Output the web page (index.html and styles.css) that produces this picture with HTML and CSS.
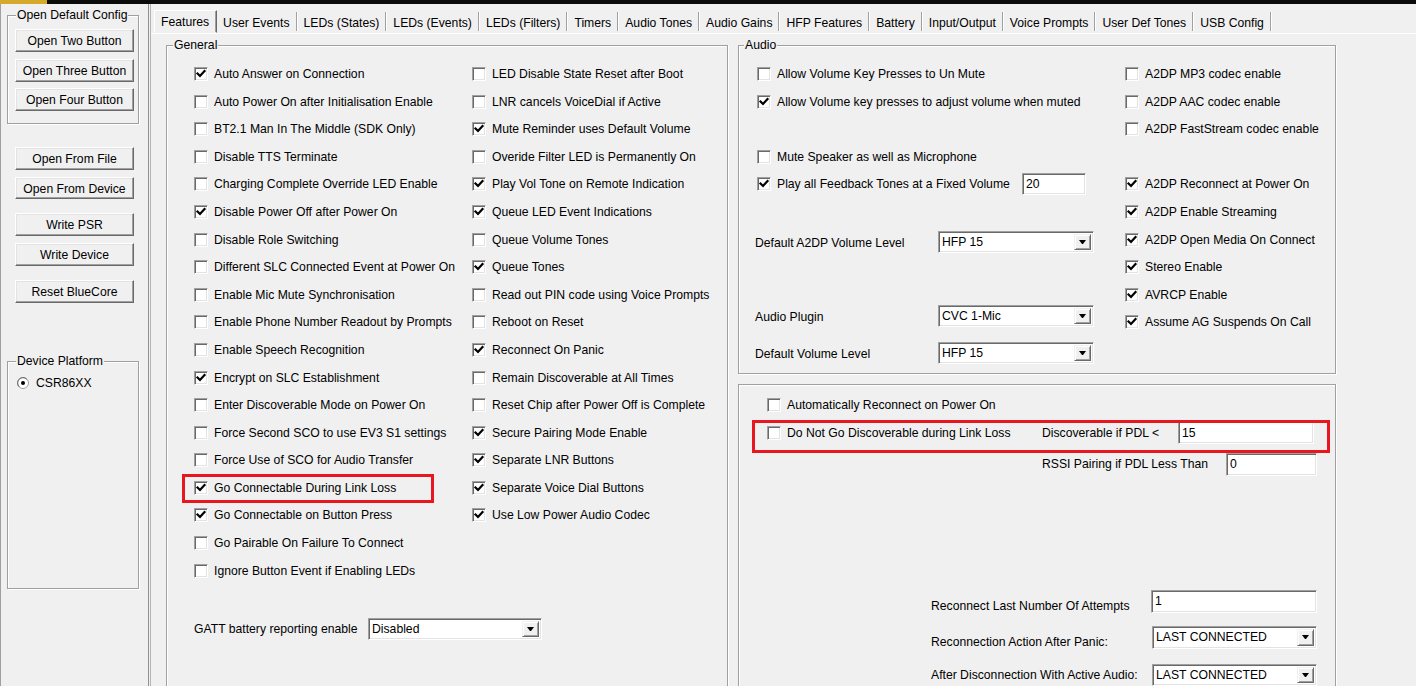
FILE: index.html
```html
<!DOCTYPE html>
<html>
<head>
<meta charset="utf-8">
<title>Config</title>
<link rel="stylesheet" href="styles.css">
</head>
<body>
<div class="topbar"><span class="accent"></span></div>
<div class="app">
  <aside class="side">
    <fieldset class="grp fs-open">
      <legend>Open Default Config</legend>
      <div class="fs-open-body">
        <div class="btn">Open Two Button</div>
        <div class="btn">Open Three Button</div>
        <div class="btn">Open Four Button</div>
      </div>
    </fieldset>
    <div class="side-btns">
      <div class="btn b-file">Open From File</div>
      <div class="btn b-dev">Open From Device</div>
      <div class="btn b-psr">Write PSR</div>
      <div class="btn b-wdev">Write Device</div>
      <div class="btn b-reset">Reset BlueCore</div>
    </div>
    <fieldset class="grp fs-plat">
      <legend>Device Platform</legend>
      <div class="radio-row">
        <svg class="radio" width="12" height="12" viewBox="0 0 12 12"><circle cx="6" cy="6" r="5.5" fill="#fff" stroke="#a0a0a0"/><path d="M2.2 9.8A5 5 0 0 1 9.8 2.2" fill="none" stroke="#696969"/><circle cx="6" cy="6" r="2" fill="#000"/></svg>
        <span>CSR86XX</span>
      </div>
    </fieldset>
  </aside>

  <div class="tabctl">
    <div class="tabstrip">
      <div class="tab sel">Features</div>
      <div class="tab">User Events</div>
      <div class="tab">LEDs (States)</div>
      <div class="tab">LEDs (Events)</div>
      <div class="tab">LEDs (Filters)</div>
      <div class="tab">Timers</div>
      <div class="tab">Audio Tones</div>
      <div class="tab">Audio Gains</div>
      <div class="tab">HFP Features</div>
      <div class="tab">Battery</div>
      <div class="tab">Input/Output</div>
      <div class="tab">Voice Prompts</div>
      <div class="tab">User Def Tones</div>
      <div class="tab">USB Config</div>
    </div>
    <div class="page">
      <fieldset class="grp general">
        <legend>General</legend>
        <div class="gbody">
          <div class="cols">
            <div class="col c1">
              <div class="row"><span class="box"><svg viewBox="0 0 12 12"><polyline points="2.5,5.5 5,8 9.5,3"/></svg></span><span>Auto Answer on Connection</span></div>
              <div class="row"><span class="box"></span><span>Auto Power On after Initialisation Enable</span></div>
              <div class="row"><span class="box"></span><span>BT2.1 Man In The Middle (SDK Only)</span></div>
              <div class="row"><span class="box"></span><span>Disable TTS Terminate</span></div>
              <div class="row"><span class="box"></span><span>Charging Complete Override LED Enable</span></div>
              <div class="row"><span class="box"><svg viewBox="0 0 12 12"><polyline points="2.5,5.5 5,8 9.5,3"/></svg></span><span>Disable Power Off after Power On</span></div>
              <div class="row"><span class="box"></span><span>Disable Role Switching</span></div>
              <div class="row"><span class="box"></span><span>Different SLC Connected Event at Power On</span></div>
              <div class="row"><span class="box"></span><span>Enable Mic Mute Synchronisation</span></div>
              <div class="row"><span class="box"></span><span>Enable Phone Number Readout by Prompts</span></div>
              <div class="row"><span class="box"></span><span>Enable Speech Recognition</span></div>
              <div class="row"><span class="box"><svg viewBox="0 0 12 12"><polyline points="2.5,5.5 5,8 9.5,3"/></svg></span><span>Encrypt on SLC Establishment</span></div>
              <div class="row"><span class="box"></span><span>Enter Discoverable Mode on Power On</span></div>
              <div class="row"><span class="box"></span><span>Force Second SCO to use EV3 S1 settings</span></div>
              <div class="row"><span class="box"></span><span>Force Use of SCO for Audio Transfer</span></div>
              <div class="row hl hl-a"><span class="box"><svg viewBox="0 0 12 12"><polyline points="2.5,5.5 5,8 9.5,3"/></svg></span><span>Go Connectable During Link Loss</span></div>
              <div class="row"><span class="box"><svg viewBox="0 0 12 12"><polyline points="2.5,5.5 5,8 9.5,3"/></svg></span><span>Go Connectable on Button Press</span></div>
              <div class="row"><span class="box"></span><span>Go Pairable On Failure To Connect</span></div>
              <div class="row"><span class="box"></span><span>Ignore Button Event if Enabling LEDs</span></div>
            </div>
            <div class="col c2">
              <div class="row"><span class="box"></span><span>LED Disable State Reset after Boot</span></div>
              <div class="row"><span class="box"></span><span>LNR cancels VoiceDial if Active</span></div>
              <div class="row"><span class="box"><svg viewBox="0 0 12 12"><polyline points="2.5,5.5 5,8 9.5,3"/></svg></span><span>Mute Reminder uses Default Volume</span></div>
              <div class="row"><span class="box"></span><span>Overide Filter LED is Permanently On</span></div>
              <div class="row"><span class="box"><svg viewBox="0 0 12 12"><polyline points="2.5,5.5 5,8 9.5,3"/></svg></span><span>Play Vol Tone on Remote Indication</span></div>
              <div class="row"><span class="box"><svg viewBox="0 0 12 12"><polyline points="2.5,5.5 5,8 9.5,3"/></svg></span><span>Queue LED Event Indications</span></div>
              <div class="row"><span class="box"></span><span>Queue Volume Tones</span></div>
              <div class="row"><span class="box"><svg viewBox="0 0 12 12"><polyline points="2.5,5.5 5,8 9.5,3"/></svg></span><span>Queue Tones</span></div>
              <div class="row"><span class="box"></span><span>Read out PIN code using Voice Prompts</span></div>
              <div class="row"><span class="box"></span><span>Reboot on Reset</span></div>
              <div class="row"><span class="box"><svg viewBox="0 0 12 12"><polyline points="2.5,5.5 5,8 9.5,3"/></svg></span><span>Reconnect On Panic</span></div>
              <div class="row"><span class="box"></span><span>Remain Discoverable at All Times</span></div>
              <div class="row"><span class="box"></span><span>Reset Chip after Power Off is Complete</span></div>
              <div class="row"><span class="box"><svg viewBox="0 0 12 12"><polyline points="2.5,5.5 5,8 9.5,3"/></svg></span><span>Secure Pairing Mode Enable</span></div>
              <div class="row"><span class="box"><svg viewBox="0 0 12 12"><polyline points="2.5,5.5 5,8 9.5,3"/></svg></span><span>Separate LNR Buttons</span></div>
              <div class="row"><span class="box"><svg viewBox="0 0 12 12"><polyline points="2.5,5.5 5,8 9.5,3"/></svg></span><span>Separate Voice Dial Buttons</span></div>
              <div class="row"><span class="box"><svg viewBox="0 0 12 12"><polyline points="2.5,5.5 5,8 9.5,3"/></svg></span><span>Use Low Power Audio Codec</span></div>
            </div>
          </div>
          <div class="frow gatt">
            <span class="lbl w174">GATT battery reporting enable</span>
            <div class="combo w174"><span class="val">Disabled</span><span class="drop"></span></div>
          </div>
        </div>
      </fieldset>

      <div class="rightcol">
        <fieldset class="grp audio">
          <legend>Audio</legend>
          <div class="abody">
            <div class="acol aleft">
              <div class="row"><span class="box"></span><span>Allow Volume Key Presses to Un Mute</span></div>
              <div class="row"><span class="box"><svg viewBox="0 0 12 12"><polyline points="2.5,5.5 5,8 9.5,3"/></svg></span><span>Allow Volume key presses to adjust volume when muted</span></div>
              <div class="row"></div>
              <div class="row"><span class="box"></span><span>Mute Speaker as well as Microphone</span></div>
              <div class="row">
                <div class="cbw w265"><span class="box"><svg viewBox="0 0 12 12"><polyline points="2.5,5.5 5,8 9.5,3"/></svg></span><span>Play all Feedback Tones at a Fixed Volume</span></div>
                <div class="tb w64 h22">20</div>
              </div>
              <div class="frow lbl-row m-a2dp">
                <span class="lbl w183">Default A2DP Volume Level</span>
                <div class="combo w156"><span class="val">HFP 15</span><span class="drop"></span></div>
              </div>
              <div class="frow lbl-row m-plug">
                <span class="lbl w183">Audio Plugin</span>
                <div class="combo w156"><span class="val">CVC 1-Mic</span><span class="drop"></span></div>
              </div>
              <div class="frow lbl-row m-dvol">
                <span class="lbl w183">Default Volume Level</span>
                <div class="combo w156"><span class="val">HFP 15</span><span class="drop"></span></div>
              </div>
            </div>
            <div class="acol aright">
              <div class="row"><span class="box"></span><span>A2DP MP3 codec enable</span></div>
              <div class="row"><span class="box"></span><span>A2DP AAC codec enable</span></div>
              <div class="row"><span class="box"></span><span>A2DP FastStream codec enable</span></div>
              <div class="row"></div>
              <div class="row"><span class="box"><svg viewBox="0 0 12 12"><polyline points="2.5,5.5 5,8 9.5,3"/></svg></span><span>A2DP Reconnect at Power On</span></div>
              <div class="row"><span class="box"><svg viewBox="0 0 12 12"><polyline points="2.5,5.5 5,8 9.5,3"/></svg></span><span>A2DP Enable Streaming</span></div>
              <div class="row"><span class="box"><svg viewBox="0 0 12 12"><polyline points="2.5,5.5 5,8 9.5,3"/></svg></span><span>A2DP Open Media On Connect</span></div>
              <div class="row"><span class="box"><svg viewBox="0 0 12 12"><polyline points="2.5,5.5 5,8 9.5,3"/></svg></span><span>Stereo Enable</span></div>
              <div class="row"><span class="box"><svg viewBox="0 0 12 12"><polyline points="2.5,5.5 5,8 9.5,3"/></svg></span><span>AVRCP Enable</span></div>
              <div class="row"><span class="box"><svg viewBox="0 0 12 12"><polyline points="2.5,5.5 5,8 9.5,3"/></svg></span><span>Assume AG Suspends On Call</span></div>
            </div>
          </div>
        </fieldset>

        <fieldset class="grp conn">
          <div class="cbody">
            <div class="row"><span class="box"></span><span>Automatically Reconnect on Power On</span></div>
            <div class="row hl hl-b">
              <div class="cbw w275"><span class="box"></span><span>Do Not Go Discoverable during Link Loss</span></div>
              <span class="lbl w136">Discoverable if PDL &lt;</span>
              <div class="tb w136 h23">15</div>
            </div>
            <div class="frow m-rssi">
              <span class="lbl w184">RSSI Pairing if PDL Less Than</span>
              <div class="tb w91 h23">0</div>
            </div>
            <div class="frow m-att">
              <span class="lbl w220 low">Reconnect Last Number Of Attempts</span>
              <div class="tb w166 h23">1</div>
            </div>
            <div class="frow m-panic">
              <span class="lbl w221 low">Reconnection Action After Panic:</span>
              <div class="combo w165 h23"><span class="val">LAST CONNECTED</span><span class="drop"></span></div>
            </div>
            <div class="frow m-after">
              <span class="lbl w221">After Disconnection With Active Audio:</span>
              <div class="combo w165"><span class="val">LAST CONNECTED</span><span class="drop"></span></div>
            </div>
          </div>
        </fieldset>
      </div>
    </div>
  </div>
</div>
</body>
</html>
```

FILE: styles.css
```css
*, *::before, *::after { box-sizing: border-box; }
html, body { margin: 0; padding: 0; }
body {
  width: 1416px;
  height: 686px;
  overflow: hidden;
  background: #f0f0f0;
  font-family: "Liberation Sans", Arial, sans-serif;
  font-size: 12.2px;
  color: #000;
  line-height: 14px;
}

.topbar { height: 4px; background: #0b0b0b; display: flex; }
.topbar .accent { width: 47px; background: #d5a92a; }

.app { display: flex; height: 682px; overflow: hidden; }

/* ---------- side panel ---------- */
.side {
  width: 149px;
  flex: none;
  border-left: 1px solid #a0a0a0;
  border-right: 1px solid #8f8f8f;
  padding-left: 6px;
}

fieldset.grp {
  margin: 0;
  padding: 0;
  min-width: 0;
  border: 1px solid #a0a0a0;
  box-shadow: inset 1px 1px 0 #fff, 1px 1px 0 #fff;
}
fieldset.grp > legend {
  padding: 0 1px;
  line-height: 14px;
  background: #f0f0f0;
}

.fs-open { width: 132px; margin-top: 4px !important; }
.fs-open > legend, .fs-plat > legend { margin-left: 8px; }
.fs-open-body {
  padding: 7px 0 12px 7px;
  display: flex;
  flex-direction: column;
  gap: 6.5px;
}

.btn {
  width: 119px;
  height: 23px;
  display: flex;
  align-items: center;
  justify-content: center;
  padding-top: 1px;
  background: #f0f0f0;
  border: 1px solid;
  border-color: #fff #696969 #696969 #fff;
  box-shadow: inset -1px -1px 0 #a0a0a0, inset 1px 1px 0 #e3e3e3;
}

.side-btns { padding-left: 8px; display: flex; flex-direction: column; }
.b-file { margin-top: 23px; }
.b-dev { margin-top: 7px; height: 22px; }
.b-psr { margin-top: 14px; }
.b-wdev { margin-top: 7px; }
.b-reset { margin-top: 14px; }

.fs-plat { width: 132px; height: 235px; margin-top: 51px !important; }
.radio-row { display: flex; align-items: center; padding-left: 9px; margin-top: 8px; height: 14px; }
.radio { flex: none; margin-right: 7px; display: block; }

/* ---------- tab control ---------- */
.tabctl {
  flex: 1;
  min-width: 0;
  margin-left: 1px;
  border-left: 1px solid #b4b4b4;
  display: flex;
  flex-direction: column;
}
.tabstrip {
  flex: none;
  height: 29px;
  display: flex;
  align-items: flex-end;
  padding-left: 3px;
}
.tab {
  height: 19px;
  margin-bottom: 2px;
  padding: 2px 6px 0 6px;
  display: flex;
  align-items: center;
  white-space: nowrap;
  border-right: 1px solid #a0a0a0;
  box-shadow: 1px 0 0 #fff;
  margin-right: 1px;
}
.tab.sel {
  height: 23px;
  margin-bottom: 0;
  padding: 1px 7px 0 6px;
  border: 1px solid;
  border-color: #fff #696969 transparent #fff;
  box-shadow: inset -1px 0 0 #a0a0a0;
  margin-right: 0;
}

.page {
  flex: 1;
  min-height: 0;
  border-top: 1px solid #fff;
  display: flex;
  align-items: flex-start;
  padding-left: 15px;
  gap: 10px;
}

/* ---------- general ---------- */
.general {
  width: 562px;
  height: 648px;
  margin-top: 4px !important;
  border-bottom: 0 !important;
  box-shadow: inset 1px 1px 0 #fff, 1px 0 0 #fff !important;
}
.general > legend { margin-left: 6px; padding: 0 2px; }
.gbody { padding: 8.2px 0 0 27px; }
.cols { display: flex; }
.c1 { width: 278px; }

.row {
  height: 27.6px;
  display: flex;
  align-items: center;
  white-space: nowrap;
}
.cbw { display: flex; align-items: center; flex: none; white-space: nowrap; }

.box {
  width: 14px;
  height: 14px;
  flex: none;
  margin-right: 6px;
  background: #fff;
  border: 1px solid;
  border-color: #a0a0a0 #fff #fff #a0a0a0;
  box-shadow: inset 1px 1px 0 #696969, inset -1px -1px 0 #e3e3e3;
  display: flex;
}
.box svg { width: 12px; height: 12px; display: block; }
.box polyline { fill: none; stroke: #000; stroke-width: 2.2; stroke-linecap: square; }

.hl { position: relative; }
.hl::after {
  content: "";
  position: absolute;
  border: 3px solid #e8161f;
  pointer-events: none;
}
.hl-a::after { left: -12px; top: 0; width: 252px; height: 29px; }
.hl-b::after { left: -15px; top: 1px; width: 578px; height: 33px; }

.frow { display: flex; align-items: center; white-space: nowrap; }
.lbl { flex: none; }
.lbl.low { padding-top: 9px; }
.gatt { margin-top: 33.4px; height: 22px; }

.combo {
  flex: none;
  height: 22px;
  display: flex;
  align-items: center;
  justify-content: space-between;
  background: #fff;
  border: 1px solid;
  border-color: #a0a0a0 #fff #fff #a0a0a0;
  box-shadow: inset 1px 1px 0 #696969, inset -1px -1px 0 #e3e3e3;
  padding: 2px 2px 2px 4px;
}
.combo .val { white-space: nowrap; margin-left: -1px; }
.combo .drop {
  width: 17px;
  align-self: stretch;
  background: #f0f0f0;
  border: 1px solid;
  border-color: #f0f0f0 #696969 #696969 #f0f0f0;
  box-shadow: inset 1px 1px 0 #fff, inset -1px -1px 0 #a0a0a0;
  display: flex;
  align-items: center;
  justify-content: center;
}
.combo .drop::before {
  content: "";
  width: 7px;
  height: 4px;
  border-left: 3.5px solid transparent;
  border-right: 3.5px solid transparent;
  border-top: 4px solid #000;
}

.tb {
  flex: none;
  background: #fff;
  border: 1px solid;
  border-color: #a0a0a0 #fff #fff #a0a0a0;
  box-shadow: inset 1px 1px 0 #696969, inset -1px -1px 0 #e3e3e3;
  padding-left: 3px;
  display: flex;
  align-items: center;
}

.w64 { width: 64px; }
.w91 { width: 91px; }
.w136 { width: 136px; }
.w156 { width: 156px; }
.w165 { width: 165px; }
.w166 { width: 166px; }
.w174 { width: 174px; }
.w183 { width: 183px; }
.w184 { width: 184px; }
.w220 { width: 220px; }
.w221 { width: 221px; }
.w265 { width: 265px; }
.w275 { width: 275px; }
.h22 { height: 22px; }
.h23 { height: 23px; }

/* ---------- right column ---------- */
.rightcol { width: 598px; display: flex; flex-direction: column; }
.audio { height: 336px; margin-top: 4px !important; }
.audio > legend { margin-left: 5px; padding: 0 2px; }
.abody { display: flex; padding: 8.2px 0 0 18px; }
.aleft { width: 368px; }
.lbl-row { margin-left: -2px; height: 22px; }
.lbl-row .lbl { padding-top: 2px; }
.m-a2dp { margin-top: 32.8px; }
.m-plug { margin-top: 52px; }
.m-dvol { margin-top: 15px; }

.conn {
  height: 302px;
  margin-top: 10px !important;
  border-bottom: 0 !important;
  box-shadow: inset 1px 1px 0 #fff, 1px 0 0 #fff !important;
}
.cbody { padding: 6.2px 0 0 28px; }
.m-rssi { margin-top: 6.4px; margin-left: 275px; height: 23px; }
.m-att { margin-top: 114px; margin-left: 164px; height: 23px; }
.m-panic { margin-top: 13px; margin-left: 164px; height: 23px; }
.m-after { margin-top: 15px; margin-left: 164px; height: 22px; }
```
